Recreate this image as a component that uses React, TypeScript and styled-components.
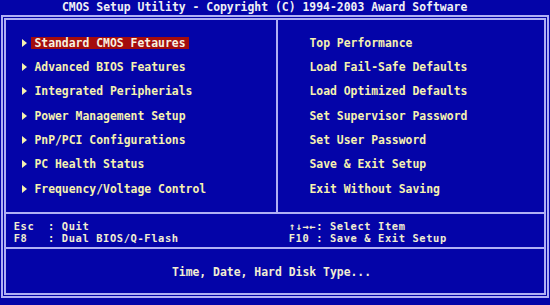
import React from "react";
import styled, { createGlobalStyle } from "styled-components";

const BLUE = "#0404a8";
const LINE = "#b0b0f4";
const YELLOW = "#f6f2b0";
const CREAM = "#f2eed2";
const ROW = 12.2;

const Global = createGlobalStyle`
  html, body { margin: 0; padding: 0; background: ${BLUE}; }
  body { width: 550px; height: 305px; overflow: hidden; }
`;

const Screen = styled.div`
  width: 550px;
  height: 305px;
  background: ${BLUE};
  font-family: "DejaVu Sans Mono", "Liberation Mono", monospace;
  font-weight: bold;
  font-size: 11.4px;
  letter-spacing: 0.012px;
  line-height: ${ROW}px;
  white-space: pre;
  display: flex;
  flex-direction: column;
`;

const TitleBar = styled.div`
  height: 15px;
  padding-left: 62px;
  color: #f0f0f4;
  display: flex;
  align-items: center;
`;

const Frame = styled.div`
  margin: 0 1px;
  border: 2px solid ${LINE};
  padding: 1px;
`;

const Inner = styled.div`
  border: 2px solid ${LINE};
  display: flex;
  flex-direction: column;
`;

const MenuArea = styled.div`
  height: 192px;
  display: flex;
  border-bottom: 2px solid ${LINE};
`;

const Column = styled.div<{ $w: number; $pad: number; $divider?: boolean }>`
  width: ${(p) => p.$w}px;
  padding-left: ${(p) => p.$pad}px;
  padding-top: 16.5px;
  box-sizing: border-box;
  display: flex;
  flex-direction: column;
  gap: ${ROW}px;
  ${(p) => (p.$divider ? `border-right: 2px solid ${LINE};` : "")}
`;

const Item = styled.div`
  height: ${ROW}px;
  display: flex;
  align-items: center;
  color: ${YELLOW};
`;

const ArrowCell = styled.span`
  width: 13.8px;
  height: ${ROW}px;
  display: flex;
  align-items: center;
`;

const Arrow = styled.span`
  width: 0;
  height: 0;
  margin-left: 1px;
  border-top: 4px solid transparent;
  border-bottom: 4px solid transparent;
  border-left: 5px solid ${YELLOW};
`;

const Label = styled.span<{ $active?: boolean }>`
  height: ${ROW}px;
  padding: 0 3px;
  margin-left: -3px;
  background: ${(p) => (p.$active ? "#a40c0c" : "transparent")};
  color: ${(p) => (p.$active ? "#f8f2e0" : YELLOW)};
`;

const HelpArea = styled.div`
  height: 35px;
  padding-top: 5.5px;
  box-sizing: border-box;
  display: flex;
  border-bottom: 2px solid ${LINE};
  color: ${CREAM};
  font-size: 10.4px;
  letter-spacing: 0.614px;
`;

const HelpCol = styled.div<{ $w?: number; $pad: number }>`
  ${(p) => (p.$w ? `width: ${p.$w}px;` : "flex: 1;")}
  padding-left: ${(p) => p.$pad}px;
  box-sizing: border-box;
  display: flex;
  flex-direction: column;
`;

const HelpLine = styled.div`
  height: ${ROW}px;
`;

const StatusArea = styled.div`
  height: 44px;
  padding-top: 17.4px;
  padding-left: 165.9px;
  box-sizing: border-box;
  color: ${CREAM};
`;

const left = [
  "Standard CMOS Fetaures",
  "Advanced BIOS Features",
  "Integrated Peripherials",
  "Power Management Setup",
  "PnP/PCI Configurations",
  "PC Health Status",
  "Frequency/Voltage Control",
];

const right = [
  "Top Performance",
  "Load Fail-Safe Defaults",
  "Load Optimized Defaults",
  "Set Supervisor Password",
  "Set User Password",
  "Save & Exit Setup",
  "Exit Without Saving",
];

export default function App() {
  return (
    <Screen>
      <Global />
      <TitleBar>CMOS Setup Utility - Copyright (C) 1994-2003 Award Software</TitleBar>
      <Frame>
        <Inner>
          <MenuArea>
            <Column $w={272} $pad={14.6} $divider>
              {left.map((t, i) => (
                <Item key={t}>
                  <ArrowCell>
                    <Arrow />
                  </ArrowCell>
                  <Label $active={i === 0}>{t}</Label>
                </Item>
              ))}
            </Column>
            <Column $w={266} $pad={31.4}>
              {right.map((t) => (
                <Item key={t}>
                  <Label>{t}</Label>
                </Item>
              ))}
            </Column>
          </MenuArea>
          <HelpArea>
            <HelpCol $w={282.75} $pad={7.75}>
              <HelpLine>{"Esc  : Quit"}</HelpLine>
              <HelpLine>{"F8   : Dual BIOS/Q-Flash"}</HelpLine>
            </HelpCol>
            <HelpCol $pad={0}>
              <HelpLine>{"↑↓→←: Select Item"}</HelpLine>
              <HelpLine>{"F10 : Save & Exit Setup"}</HelpLine>
            </HelpCol>
          </HelpArea>
          <StatusArea>Time, Date, Hard Disk Type...</StatusArea>
        </Inner>
      </Frame>
    </Screen>
  );
}
